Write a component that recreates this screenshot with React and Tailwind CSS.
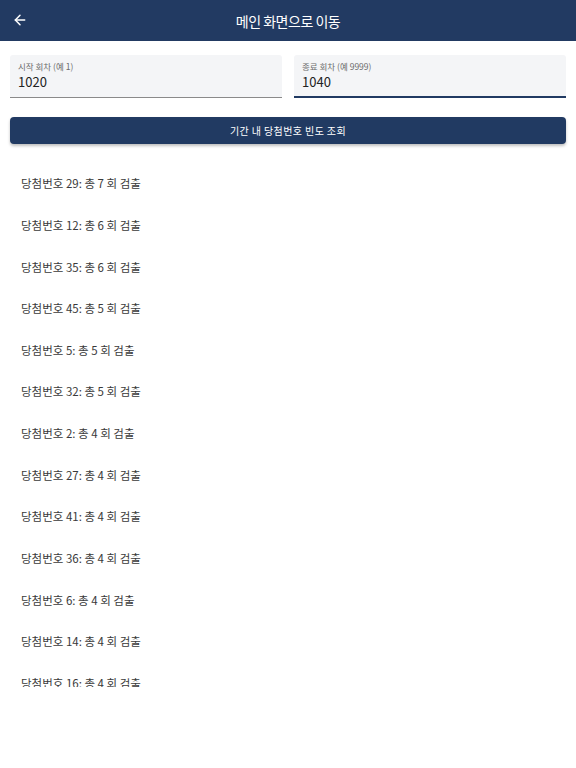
import { ArrowLeft } from 'lucide-react';

const results = [
  { num: 29, count: 7 },
  { num: 12, count: 6 },
  { num: 35, count: 6 },
  { num: 45, count: 5 },
  { num: 5, count: 5 },
  { num: 32, count: 5 },
  { num: 2, count: 4 },
  { num: 27, count: 4 },
  { num: 41, count: 4 },
  { num: 36, count: 4 },
  { num: 6, count: 4 },
  { num: 14, count: 4 },
  { num: 16, count: 4 },
];

const font = { fontFamily: '"Noto Sans CJK KR", "Noto Sans", sans-serif' };

function RoundField({ label, value, focused }) {
  return (
    <div
      className={
        'flex-1 h-[43px] bg-[#f4f5f7] rounded-t-[3px] px-[8px] pt-[6px] flex flex-col ' +
        (focused ? 'border-b-2 border-[#213a62]' : 'border-b border-[#8a8a8a]')
      }
    >
      <span className="text-[8.5px] leading-[11px] text-[#6b6b6b]">{label}</span>
      <span className="text-[13px] leading-[18px] text-[#222] mt-[1px]">{value}</span>
    </div>
  );
}

export default function App() {
  return (
    <div className="w-[576px] h-[768px] bg-white flex flex-col" style={font}>
      {/* app bar */}
      <div className="h-[41px] bg-[#223a62] flex items-center relative shrink-0">
        <button className="absolute left-[10px] top-[10px] w-[20px] h-[20px] flex items-center justify-center text-white">
          <ArrowLeft size={16} strokeWidth={2.25} />
        </button>
        <div className="flex-1 text-center text-white text-[14px] tracking-[-0.5px] leading-[20px]">
          메인 화면으로 이동
        </div>
      </div>

      {/* range inputs */}
      <div className="flex gap-[12px] px-[10px] pt-[14px]">
        <RoundField label="시작 회차 (예 1)" value="1020" />
        <RoundField label="종료 회차 (예 9999)" value="1040" focused />
      </div>

      <div className="px-[10px] pt-[18px]">
        <button className="w-full h-[27px] rounded-[4px] bg-[#213a62] text-white text-[10px] tracking-[0.4px] shadow-[0_2px_3px_rgba(0,0,0,0.25)]">
          기간 내 당첨번호 빈도 조회
        </button>
      </div>

      {/* result list */}
      <div className="mt-[19px] h-[524px] overflow-hidden">
        {results.map(function (r, i) {
          return (
            <div key={i} className="h-[41.67px] flex items-center px-[21px] text-[11.5px] text-[#3a3a3a]">
              당첨번호 {r.num}: 총 {r.count} 회 검출
            </div>
          );
        })}
      </div>
    </div>
  );
}
